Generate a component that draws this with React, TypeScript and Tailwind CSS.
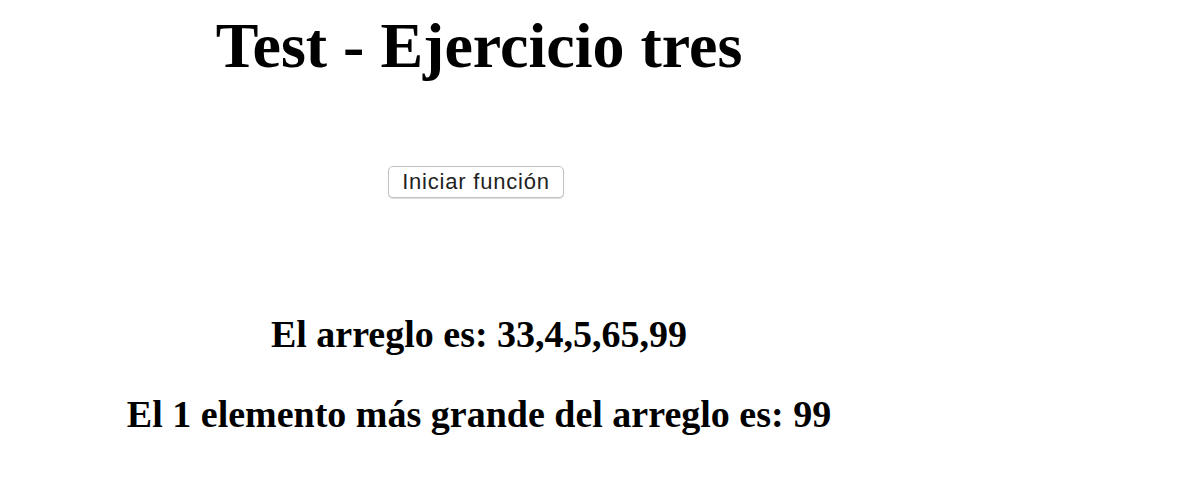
export default function App() {
  return (
    <div className="w-[958px] bg-white pb-[40px] text-center text-black font-['Liberation_Serif',serif]">
      <h1 className="pt-[14px] text-[64px] font-bold leading-[64px]">Test - Ejercicio tres</h1>
      <div className="mt-[88px] h-[32px] pr-[6px]">
        <button className="h-[32px] rounded-[5px] border border-[#c2c2c2] bg-white px-[13px] font-['Liberation_Sans',sans-serif] text-[22px] leading-[30px] tracking-[0.8px] text-[#222] shadow-[0_1px_1px_rgba(0,0,0,0.15)]">
          Iniciar función
        </button>
      </div>
      <h2 className="mt-[114px] text-[38px] font-bold leading-[44px]">El arreglo es: 33,4,5,65,99</h2>
      <h2 className="mt-[36px] text-[38px] font-bold leading-[44px]">El 1 elemento más grande del arreglo es: 99</h2>
    </div>
  );
}
